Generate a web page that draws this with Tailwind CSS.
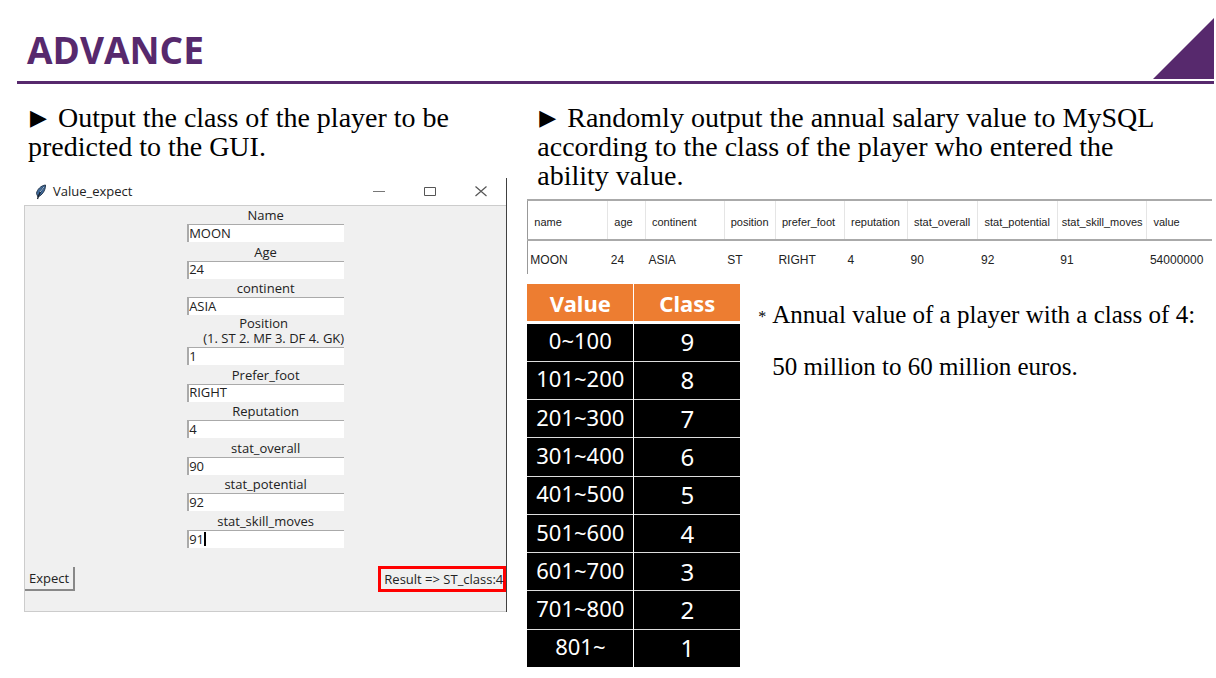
<!DOCTYPE html>
<html lang="en">
<head>
<meta charset="utf-8">
<meta name="viewport" content="width=device-width, initial-scale=1">
<title>ADVANCE</title>
<script src="https://cdn.jsdelivr.net/npm/@tailwindcss/browser@4"></script>
</head>
<body class="bg-white text-black">
<header class="ml-[17px] mr-[2px] border-b-3 border-[#57296d] pt-[18px]">
  <div class="flex items-center justify-between pb-[2px]">
    <h1 class="pl-[10px] pt-[2px] font-['Open_Sans'] text-[37px] leading-[48px] font-bold text-[#57296d]">ADVANCE</h1>
    <svg class="h-[61px] w-[61px]" viewBox="0 0 61 61" aria-hidden="true"><path d="M61 0V61H0Z" fill="#57296d"/></svg>
  </div>
</header>
<main class="grid grid-cols-[12fr_17fr] gap-x-5 pl-6 pr-1 pt-[19px]">
  <section>
    <p class="whitespace-nowrap pl-1 font-['Liberation_Serif',serif] text-[28px] leading-[29px]"><span class="ml-[2px] mr-1 align-[2px] font-['DejaVu_Sans'] text-[22px] leading-[16px]">▶</span> Output the class of the player to be<br>predicted to the GUI.</p>
    <div class="mt-[17px] border-r border-[#404040] font-['Open_Sans','Noto_Sans',sans-serif] text-[13px] text-[#222]">
      <div class="flex h-[27px] items-center">
        <svg class="ml-[11px] h-4 w-3" viewBox="0 0 12 16" aria-hidden="true"><path d="M10.5 1C6 1.500 2 5.500 1.500 9.500L3 13C7 11 10.500 7 10.500 1Z" fill="#416b9c" stroke="#26384d"/><path d="M9 3C6 6 4 10 2.500 15" fill="none" stroke="#182230" stroke-width="1.300"/><path d="M9 3 5 8" stroke="#a9c8e8"/></svg>
        <h2 class="ml-[6px] flex-1">Value_expect</h2>
        <button type="button" aria-label="Minimize" class="flex w-[51px] justify-center"><svg class="h-3 w-3" viewBox="0 0 12 12" fill="none" stroke="#777"><path d="M0 5.500H12"/></svg></button>
        <button type="button" aria-label="Maximize" class="flex w-[51px] justify-center"><svg class="h-3 w-3" viewBox="0 0 12 12" fill="none" stroke="#555"><path d="M.5 1.500H11.500V9.500H.5Z"/></svg></button>
        <button type="button" aria-label="Close" class="flex w-[51px] justify-center"><svg class="h-3 w-3" viewBox="0 0 12 12" fill="none" stroke="#555" stroke-width="1.200"><path d="M.5 .5 11.500 10M11.500 .5 .5 10"/></svg></button>
      </div>
      <form class="border border-r-0 border-[#ccc] bg-[#f0f0f0] pb-[19px]">
        <div class="mx-auto flex h-[342px] w-[157px] flex-col justify-between">
          <div class="flex flex-col"><label for="name" class="text-center leading-[18px]">Name</label><input id="name" value="MOON" class="h-[18px] border-l-2 border-t border-[#aaa] bg-white"></div>
          <div class="flex flex-col"><label for="age" class="text-center leading-[18px]">Age</label><input id="age" value="24" class="h-[18px] border-l-2 border-t border-[#aaa] bg-white"></div>
          <div class="flex flex-col"><label for="continent" class="text-center leading-[18px]">continent</label><input id="continent" value="ASIA" class="h-[18px] border-l-2 border-t border-[#aaa] bg-white"></div>
          <div class="flex flex-col"><label for="position" class="pb-px text-center leading-[15px]"><span class="block pr-1">Position</span><span class="block whitespace-nowrap text-right">(1. ST 2. MF 3. DF 4. GK)</span></label><input id="position" value="1" class="h-[18px] border-l-2 border-t border-[#aaa] bg-white"></div>
          <div class="flex flex-col"><label for="foot" class="text-center leading-[18px]">Prefer_foot</label><input id="foot" value="RIGHT" class="h-[18px] border-l-2 border-t border-[#aaa] bg-white"></div>
          <div class="flex flex-col"><label for="reputation" class="text-center leading-[18px]">Reputation</label><input id="reputation" value="4" class="h-[18px] border-l-2 border-t border-[#aaa] bg-white"></div>
          <div class="flex flex-col"><label for="overall" class="text-center leading-[18px]">stat_overall</label><input id="overall" value="90" class="h-[18px] border-l-2 border-t border-[#aaa] bg-white"></div>
          <div class="flex flex-col"><label for="potential" class="text-center leading-[18px]">stat_potential</label><input id="potential" value="92" class="h-[18px] border-l-2 border-t border-[#aaa] bg-white"></div>
          <div class="relative flex flex-col"><label for="moves" class="text-center leading-[18px]">stat_skill_moves</label><input id="moves" value="91" class="h-[18px] border-l-2 border-t border-[#aaa] bg-white"><span class="absolute bottom-[2px] left-[17px] h-[14px] w-[2px] bg-black"></span></div>
        </div>
        <div class="mt-[18px] flex items-center justify-between">
          <button type="button" class="h-6 border-b-2 border-r-2 border-[#888] px-1 leading-[20px]">Expect</button>
          <output class="h-[26px] border-3 border-[#f00] pl-[3px] leading-[20px]">Result =&gt; ST_class:4</output>
        </div>
      </form>
    </div>
  </section>
  <section>
    <p class="whitespace-nowrap pl-[10px] font-['Liberation_Serif',serif] text-[28px] leading-[29px]"><span class="ml-[2px] mr-1 align-[2px] font-['DejaVu_Sans'] text-[22px] leading-[16px]">▶</span> Randomly output the annual salary value to MySQL<br>according to the class of the player who entered the<br>ability value.</p>
    <table class="mt-[9px] w-full table-fixed border-t-2 border-[#aaa] font-['Liberation_Sans',sans-serif] text-[#222]">
      <colgroup><col class="w-[11.7%]"><col class="w-[5.5%]"><col class="w-[11.5%]"><col class="w-[7.5%]"><col class="w-[10.1%]"><col class="w-[9.2%]"><col class="w-[10.3%]"><col class="w-[11.6%]"><col class="w-[13.1%]"><col class="w-[9.5%]"></colgroup>
      <thead><tr class="h-10 border-b-2 border-[#aaa] text-left text-[11px] whitespace-nowrap">
        <th class="border-l border-[#999] pl-[6px] pt-1 font-normal">name</th><th class="border-l border-[#e5e5e5] pl-[6px] pt-1 font-normal">age</th><th class="border-l border-[#e5e5e5] pl-[6px] pt-1 font-normal">continent</th><th class="border-l border-[#e5e5e5] pl-[6px] pt-1 font-normal">position</th><th class="border-l border-[#e5e5e5] pl-[6px] pt-1 font-normal">prefer_foot</th><th class="border-l border-[#e5e5e5] pl-[6px] pt-1 font-normal">reputation</th><th class="border-l border-[#e5e5e5] pl-[6px] pt-1 font-normal">stat_overall</th><th class="border-l border-[#e5e5e5] pl-[6px] pt-1 font-normal">stat_potential</th><th class="border-l border-[#e5e5e5] pl-[4px] pt-1 font-normal">stat_skill_moves</th><th class="border-l border-[#e5e5e5] pl-[6px] pt-1 font-normal">value</th>
      </tr></thead>
      <tbody><tr class="h-[34px] text-[12px] whitespace-nowrap">
        <td class="border-l border-[#999] pl-[2px] pt-1">MOON</td><td class="pl-[3px] pt-1">24</td><td class="pl-[3px] pt-1">ASIA</td><td class="pl-[3px] pt-1">ST</td><td class="pl-[3px] pt-1">RIGHT</td><td class="pl-[3px] pt-1">4</td><td class="pl-[3px] pt-1">90</td><td class="pl-[3px] pt-1">92</td><td class="pl-[3px] pt-1">91</td><td class="pl-[3px] pt-1">54000000</td>
      </tr></tbody>
    </table>
    <div class="mt-[10px] flex">
      <table class="h-[383px] w-[213px] shrink-0 table-fixed bg-black text-center font-['Noto_Sans',sans-serif] text-[22px] leading-[30px] text-white">
        <thead><tr class="h-[38px] border-b-3 border-white bg-[#ed7d31] text-[22px]"><th class="border-r border-white pt-[2px] font-bold">Value</th><th class="pt-[2px] font-bold">Class</th></tr></thead>
        <tbody>
          <tr class="border-b border-[#ddd]"><td class="border-r border-white pb-[4px]">0~100</td><td class="text-[24px]">9</td></tr>
          <tr class="border-b border-[#ddd]"><td class="border-r border-white pb-[4px]">101~200</td><td class="text-[24px]">8</td></tr>
          <tr class="border-b border-[#ddd]"><td class="border-r border-white pb-[4px]">201~300</td><td class="text-[24px]">7</td></tr>
          <tr class="border-b border-[#ddd]"><td class="border-r border-white pb-[4px]">301~400</td><td class="text-[24px]">6</td></tr>
          <tr class="border-b border-[#ddd]"><td class="border-r border-white pb-[4px]">401~500</td><td class="text-[24px]">5</td></tr>
          <tr class="border-b border-[#ddd]"><td class="border-r border-white pb-[4px]">501~600</td><td class="text-[24px]">4</td></tr>
          <tr class="border-b border-[#ddd]"><td class="border-r border-white pb-[4px]">601~700</td><td class="text-[24px]">3</td></tr>
          <tr class="border-b border-[#ddd]"><td class="border-r border-white pb-[4px]">701~800</td><td class="text-[24px]">2</td></tr>
          <tr><td class="border-r border-white pb-[4px]">801~</td><td class="text-[24px]">1</td></tr>
        </tbody>
      </table>
      <p class="flex whitespace-nowrap pl-[18px] pt-[5px] font-['Liberation_Serif',serif] text-[25px] leading-[52px]"><span class="w-[14px] shrink-0 pt-[2px] text-[16px]">*</span><span>Annual value of a player with a class of 4:<br>50 million to 60 million euros.</span></p>
    </div>
  </section>
</main>
</body>
</html>
